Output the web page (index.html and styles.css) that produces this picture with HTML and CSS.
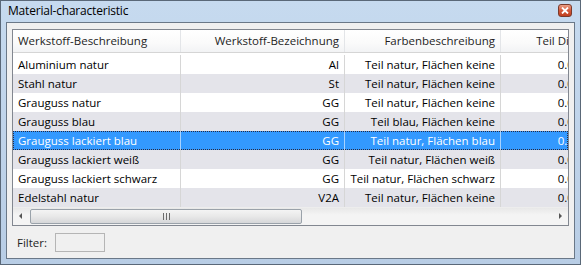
FILE: index.html
```html
<!DOCTYPE html>
<html lang="de">
<head>
    <meta charset="UTF-8">
    <link rel="stylesheet" href="styles.css">
</head>
<body>

    <div class="window">
        <div class="titlebar">
            <span class="title">Material-characteristic</span>
            <span class="close-btn">
                <svg width="8" height="7" viewBox="0 0 8 7"><path d="M1 0.5 L7 6.5 M7 0.5 L1 6.5" stroke="#fff" stroke-width="1.8"/></svg>
            </span>
        </div>

        <div class="client">
            <div class="grid">
                <div class="grid-head">
                    <div class="cell c1">Werkstoff-Beschreibung</div>
                    <div class="cell c2">Werkstoff-Bezeichnung</div>
                    <div class="cell c3">Farbenbeschreibung</div>
                    <div class="cell c4">Teil Dicke</div>
                </div>
                <div class="grid-body">
                    <div class="row">
                        <div class="cell c1">Aluminium natur</div>
                        <div class="cell c2">Al</div>
                        <div class="cell c3">Teil natur, Flächen keine</div>
                        <div class="cell c4">0.000</div>
                    </div>
                    <div class="row alt">
                        <div class="cell c1">Stahl natur</div>
                        <div class="cell c2">St</div>
                        <div class="cell c3">Teil natur, Flächen keine</div>
                        <div class="cell c4">0.000</div>
                    </div>
                    <div class="row">
                        <div class="cell c1">Grauguss natur</div>
                        <div class="cell c2">GG</div>
                        <div class="cell c3">Teil natur, Flächen keine</div>
                        <div class="cell c4">0.000</div>
                    </div>
                    <div class="row alt">
                        <div class="cell c1">Grauguss blau</div>
                        <div class="cell c2">GG</div>
                        <div class="cell c3">Teil blau, Flächen keine</div>
                        <div class="cell c4">0.000</div>
                    </div>
                    <div class="row selected">
                        <div class="cell c1">Grauguss lackiert blau</div>
                        <div class="cell c2">GG</div>
                        <div class="cell c3">Teil natur, Flächen blau</div>
                        <div class="cell c4">0.000</div>
                    </div>
                    <div class="row alt">
                        <div class="cell c1">Grauguss lackiert weiß</div>
                        <div class="cell c2">GG</div>
                        <div class="cell c3">Teil natur, Flächen weiß</div>
                        <div class="cell c4">0.000</div>
                    </div>
                    <div class="row">
                        <div class="cell c1">Grauguss lackiert schwarz</div>
                        <div class="cell c2">GG</div>
                        <div class="cell c3">Teil natur, Flächen schwarz</div>
                        <div class="cell c4">0.000</div>
                    </div>
                    <div class="row alt">
                        <div class="cell c1">Edelstahl natur</div>
                        <div class="cell c2">V2A</div>
                        <div class="cell c3">Teil natur, Flächen keine</div>
                        <div class="cell c4">0.000</div>
                    </div>
                </div>
                <div class="hscroll">
                    <span class="arrow arrow-left"></span>
                    <div class="track">
                        <div class="thumb"><span class="grip"></span></div>
                    </div>
                    <span class="arrow arrow-right"></span>
                </div>
            </div>

            <div class="filter">
                <span>Filter:</span>
                <div class="filter-box"></div>
            </div>
        </div>
    </div>

</body>
</html>
```

FILE: styles.css
```css
body {
    margin: 0;
    padding: 0;
    font-family: 'Open Sans', 'Noto Sans', sans-serif;
    font-size: 11.5px;
    background-color: #ffffff;
}

.window {
    width: 581px;
    height: 265px;
    box-sizing: border-box;
    border: 1px solid #5a6878;
    background: linear-gradient(#c6daef, #b8cde5);
    padding: 0 5px 5px 5px;
    display: flex;
    flex-direction: column;
}

.titlebar {
    height: 21px;
    flex: none;
    display: flex;
    align-items: center;
    justify-content: space-between;
    padding: 0 3px 0 2px;
}

.title {
    color: #000;
    font-size: 12px;
    letter-spacing: -0.2px;
    margin-top: -2px;
}

.close-btn {
    width: 14px;
    height: 13px;
    box-sizing: border-box;
    border: 1px solid #7a3a2c;
    border-radius: 3px;
    background: linear-gradient(#eba088, #d4583a 50%, #c0401f);
    display: flex;
    align-items: center;
    justify-content: center;
    margin-top: -2px;
}

.client {
    flex: 1;
    border: 1px solid #6a7888;
    background-color: #f0f0f0;
    padding: 6px 5px 0 5px;
    display: flex;
    flex-direction: column;
}

.grid {
    border: 1px solid #828790;
    background-color: #ffffff;
    overflow: hidden;
}

.grid-head {
    display: flex;
    height: 22px;
    border-bottom: 1px solid #d5d5d5;
    background: linear-gradient(#ffffff, #fafafa 60%, #f2f3f5);
    white-space: nowrap;
}

.grid-head .cell {
    line-height: 22px;
    color: #1e1e1e;
    border-right: 1px solid #e3e5e8;
}

.grid-body {
    padding-top: 2px;
}

.row {
    display: flex;
    height: 19px;
    white-space: nowrap;
}

.row .cell {
    line-height: 19px;
    border-right: 1px solid #d6d6d6;
}

.row.alt {
    background-color: #e4e4ea;
}

.row.selected {
    background-color: #3399ff;
    color: #ffffff;
    outline: 1px dotted #2a2a40;
    outline-offset: -1px;
}

.row.selected .cell {
    border-right-color: #a8d2ff;
}

.cell {
    flex: none;
    box-sizing: border-box;
    padding: 0 5px;
    overflow: hidden;
}

.c1 {
    width: 168px;
    text-align: left;
}

.c2 {
    width: 164px;
    text-align: right;
}

.c3 {
    width: 156px;
    text-align: right;
}

.c4 {
    width: 92px;
    text-align: right;
}

.hscroll {
    height: 17px;
    display: flex;
    align-items: center;
    background: linear-gradient(#e8e8e8, #f4f4f4 40%, #f4f4f4);
    border-top: 1px solid #ededed;
}

.arrow {
    width: 17px;
    height: 17px;
    flex: none;
    position: relative;
}

.arrow::after {
    content: "";
    position: absolute;
    top: 5px;
    border-top: 3px solid transparent;
    border-bottom: 3px solid transparent;
}

.arrow-left::after {
    left: 6px;
    border-right: 3px solid #555;
}

.arrow-right::after {
    left: 8px;
    border-left: 3px solid #555;
}

.track {
    flex: 1;
    height: 17px;
    display: flex;
    align-items: center;
}

.thumb {
    width: 272px;
    height: 15px;
    box-sizing: border-box;
    border: 1px solid #9aa2aa;
    border-radius: 2px;
    background: linear-gradient(#f4f4f4, #e8e8e8 50%, #d6d7d9);
    display: flex;
    align-items: center;
    justify-content: center;
}

.grip {
    width: 7px;
    height: 7px;
    background: repeating-linear-gradient(90deg, #6b6b6b 0, #6b6b6b 1px, transparent 1px, transparent 3px);
}

.filter {
    display: flex;
    align-items: center;
    gap: 8px;
    padding: 7px 0 0 5px;
    color: #1e1e1e;
}

.filter-box {
    width: 50px;
    height: 19px;
    box-sizing: border-box;
    border: 1px solid #b5b5b5;
    background-color: #f0f0f0;
}
```
